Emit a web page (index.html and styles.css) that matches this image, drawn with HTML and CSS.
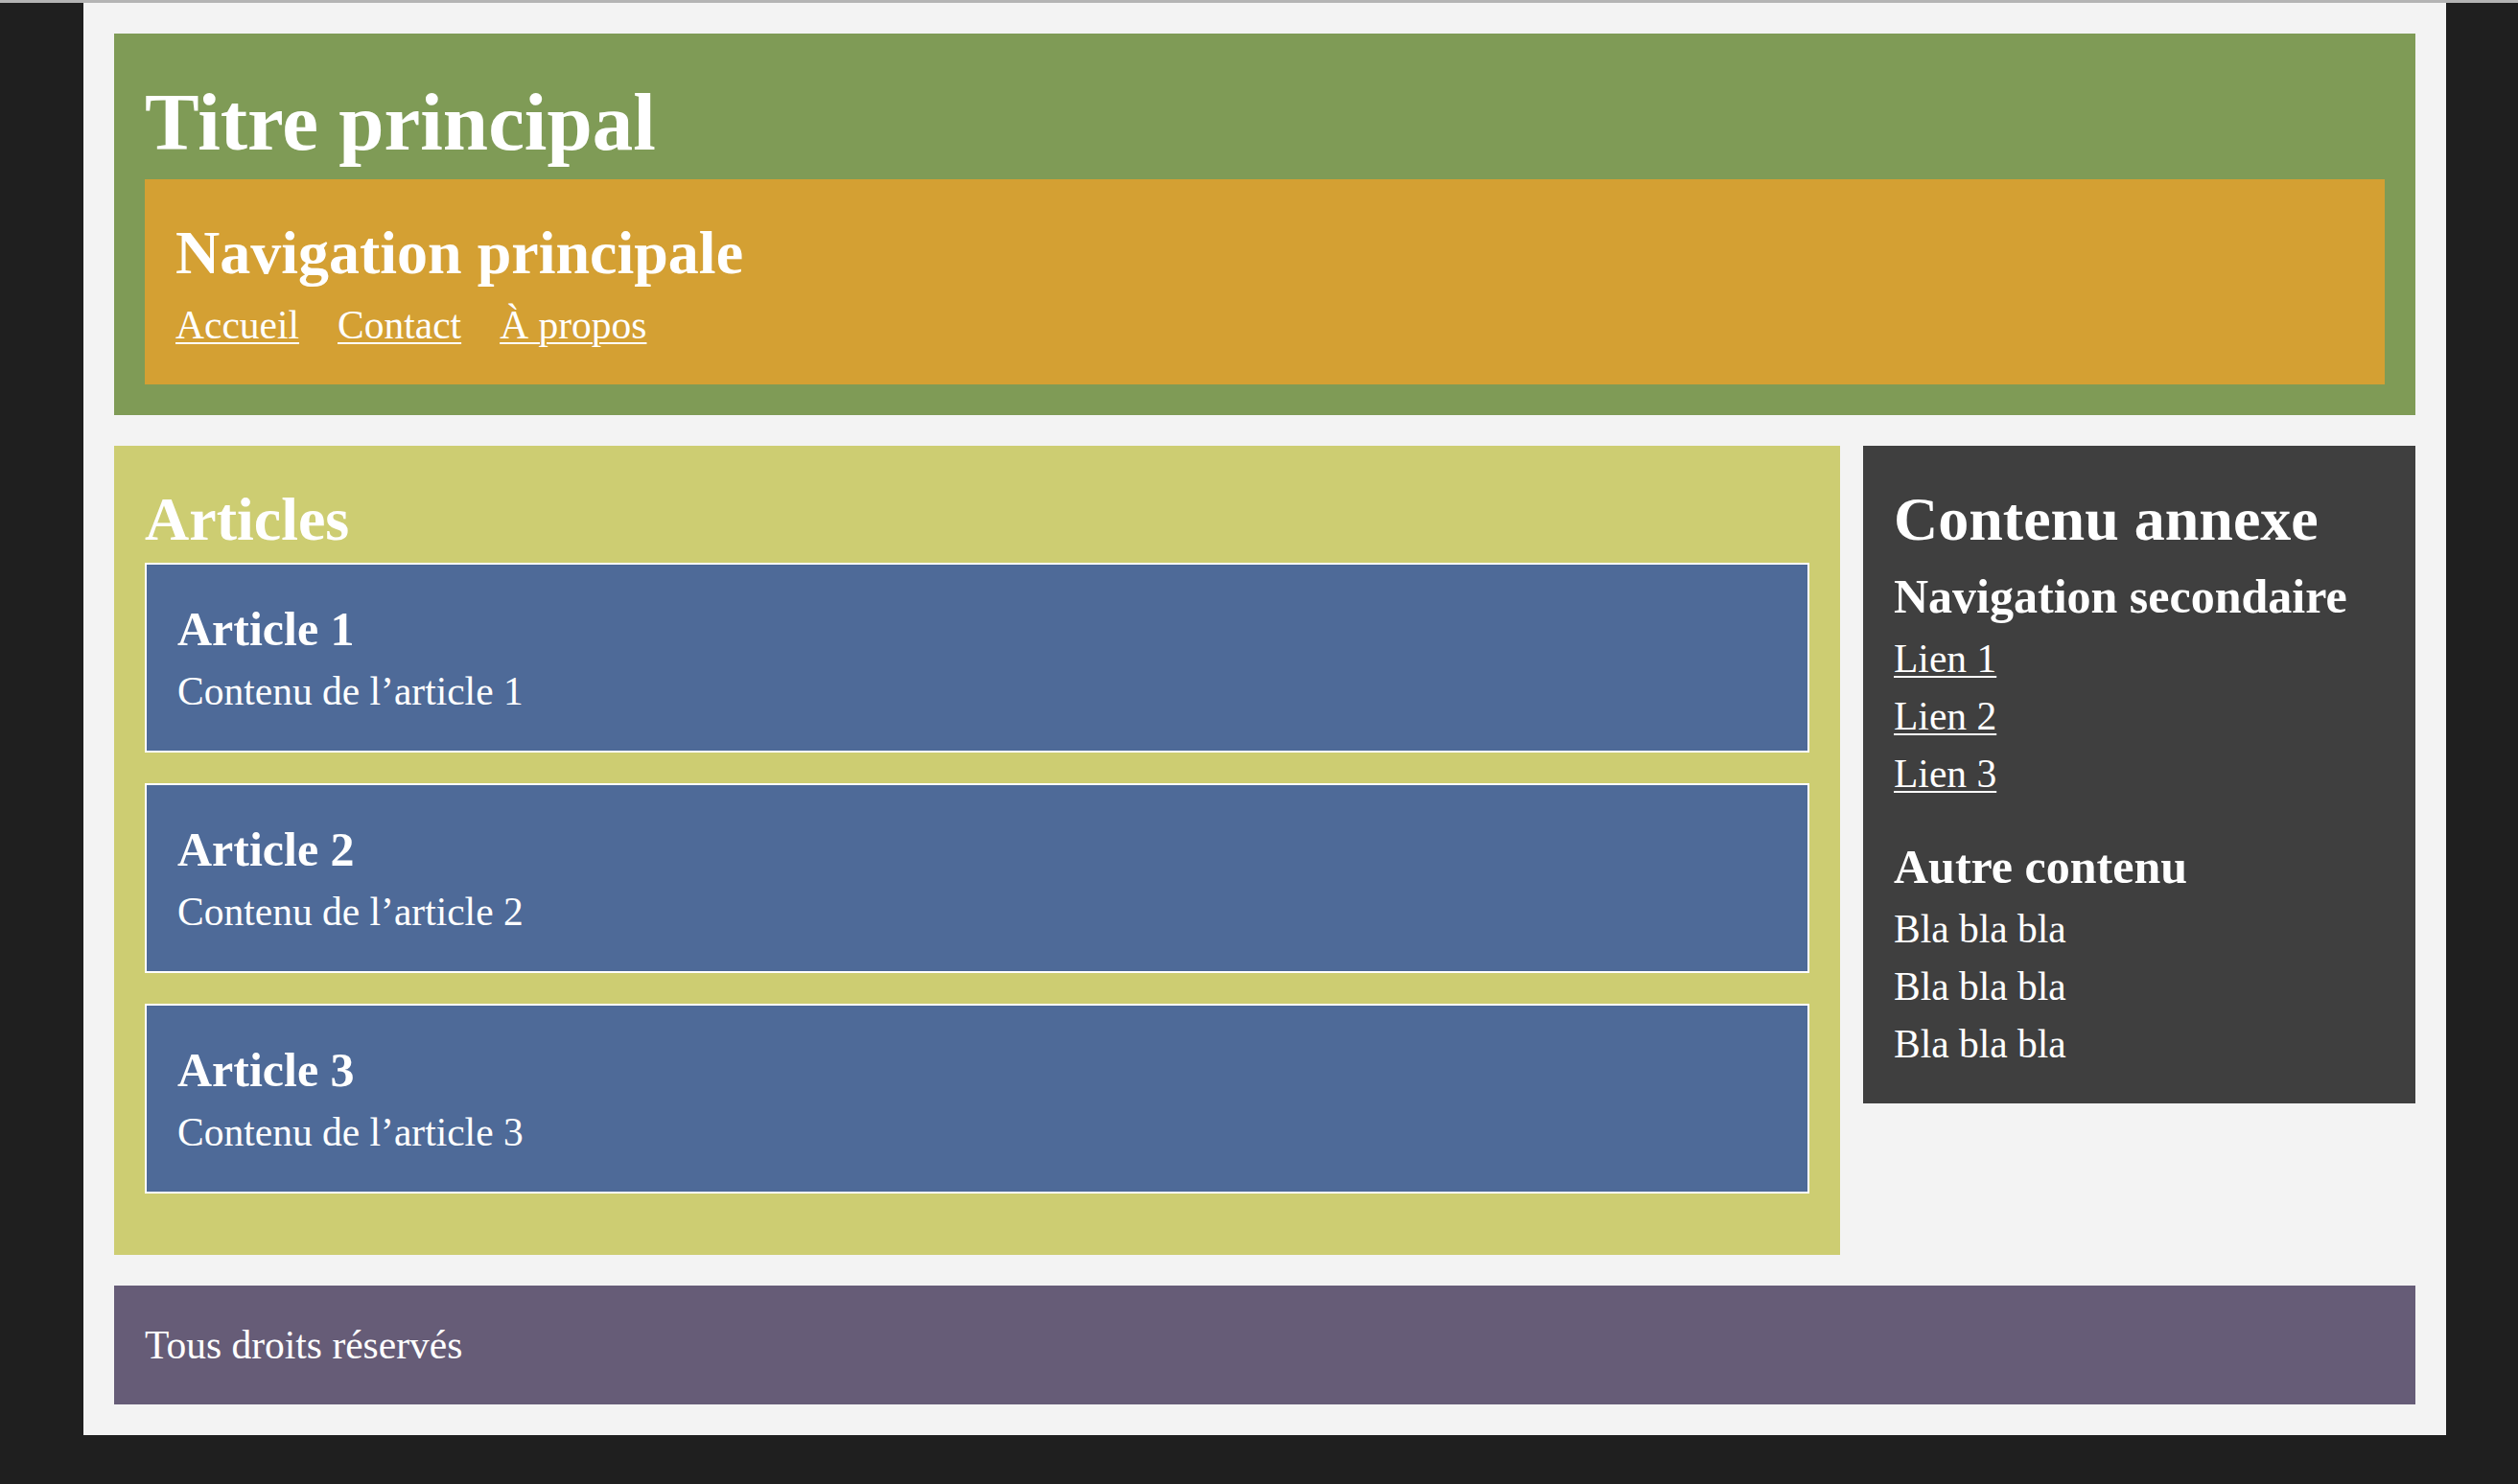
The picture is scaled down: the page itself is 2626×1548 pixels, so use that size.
FILE: index.html
```html
<!DOCTYPE html>
<html lang="fr">
<head>
<meta charset="utf-8">
<title>Mise en page</title>
<link rel="stylesheet" href="styles.css">
</head>
<body>
<div class="page">
  <header class="site-header">
    <h1 class="site-title">Titre principal</h1>
    <nav class="main-nav">
      <h2 class="section-title">Navigation principale</h2>
      <ul class="main-nav-list">
        <li><a href="#">Accueil</a></li>
        <li><a href="#">Contact</a></li>
        <li><a href="#">À propos</a></li>
      </ul>
    </nav>
  </header>
  <div class="content">
    <main class="articles">
      <h2 class="section-title">Articles</h2>
      <article class="article">
        <h3 class="sub-title">Article 1</h3>
        <p class="text">Contenu de l’article 1</p>
      </article>
      <article class="article">
        <h3 class="sub-title">Article 2</h3>
        <p class="text">Contenu de l’article 2</p>
      </article>
      <article class="article">
        <h3 class="sub-title">Article 3</h3>
        <p class="text">Contenu de l’article 3</p>
      </article>
    </main>
    <aside class="sidebar">
      <h2 class="section-title">Contenu annexe</h2>
      <nav class="side-nav">
        <h3 class="sub-title">Navigation secondaire</h3>
        <ul class="side-nav-list">
          <li><a href="#">Lien 1</a></li>
          <li><a href="#">Lien 2</a></li>
          <li><a href="#">Lien 3</a></li>
        </ul>
      </nav>
      <div class="side-other">
        <h3 class="sub-title">Autre contenu</h3>
        <p class="text">Bla bla bla</p>
        <p class="text">Bla bla bla</p>
        <p class="text">Bla bla bla</p>
      </div>
    </aside>
  </div>
  <footer class="site-footer">
    <p class="text">Tous droits réservés</p>
  </footer>
</div>
</body>
</html>
```

FILE: styles.css
```css
html {
  background: #1f1f1f;
}

body {
  margin: 0;
  border-top: 3px solid #b4b4b4;
  font-family: "Liberation Serif", "Times New Roman", serif;
  font-size: 41.5px;
  line-height: 60px;
  color: #ffffff;
}

.page {
  box-sizing: border-box;
  width: 2464px;
  margin-left: 87px;
  padding: 32px;
  background: #f3f3f3;
  display: flex;
  flex-direction: column;
  gap: 32px;
}

h1, h2, h3, p, ul {
  margin: 0;
  padding: 0;
}

ul {
  list-style: none;
}

a {
  color: #ffffff;
  text-decoration: underline;
  text-decoration-thickness: 2px;
  text-underline-offset: 4px;
}

.site-title {
  font-size: 85px;
  line-height: 120px;
  font-weight: bold;
}

.section-title {
  font-size: 64px;
  line-height: 90px;
  font-weight: bold;
}

.sub-title {
  font-size: 50px;
  line-height: 70px;
  font-weight: bold;
}

.site-header {
  background: #7f9b56;
  padding: 32px;
}

.main-nav {
  background: #d4a033;
  padding: 32px;
}

.main-nav-list {
  display: flex;
  gap: 40px;
}

.content {
  display: grid;
  grid-template-columns: 1800px 576px;
  column-gap: 24px;
  align-items: start;
}

.articles {
  background: #cdcd72;
  padding: 32px;
}

.article {
  background: #4e6a98;
  border: 2px solid #ffffff;
  padding: 32px;
  margin-bottom: 32px;
}

.sidebar {
  background: #3f3f3f;
  padding: 32px;
}

.side-nav {
  margin-bottom: 32px;
}

.site-footer {
  background: #665c77;
  padding: 32px;
}
```
